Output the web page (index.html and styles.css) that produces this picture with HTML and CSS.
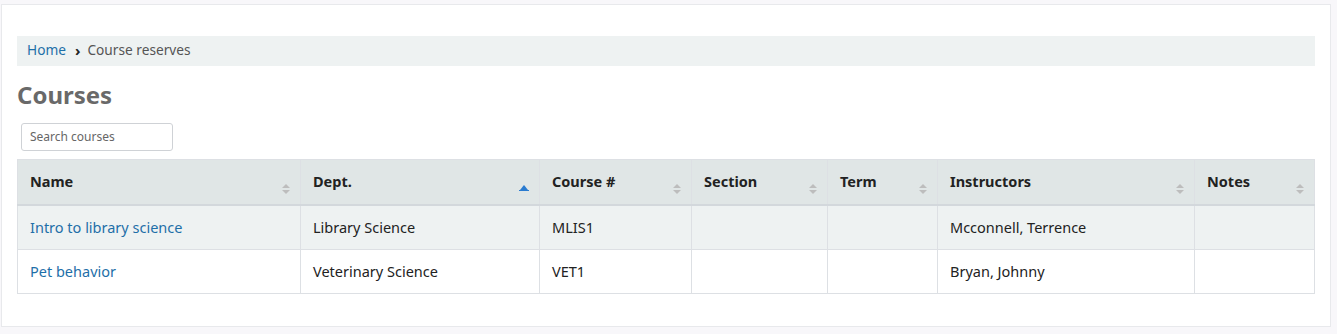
FILE: index.html
```html
<!DOCTYPE html>
<html lang="en">
<head>
    <meta charset="UTF-8">
    <meta name="viewport" content="width=device-width, initial-scale=1.0">
    <title>Course reserves</title>
    <link rel="stylesheet" href="styles.css">
</head>
<body>
    <main class="panel">
        <nav class="breadcrumb">
            <a href="#">Home</a>
            <span class="sep">&#8250;</span>
            <span class="current">Course reserves</span>
        </nav>

        <h1>Courses</h1>

        <div class="search">
            <input type="text" placeholder="Search courses">
        </div>

        <table class="courses">
            <colgroup>
                <col style="width:283px">
                <col style="width:239px">
                <col style="width:152px">
                <col style="width:136px">
                <col style="width:110px">
                <col style="width:257px">
                <col style="width:120px">
            </colgroup>
            <thead>
                <tr>
                    <th class="sortable">Name</th>
                    <th class="sorted-asc">Dept.</th>
                    <th class="sortable">Course #</th>
                    <th class="sortable">Section</th>
                    <th class="sortable">Term</th>
                    <th class="sortable">Instructors</th>
                    <th class="sortable">Notes</th>
                </tr>
            </thead>
            <tbody>
                <tr class="odd">
                    <td><a href="#">Intro to library science</a></td>
                    <td>Library Science</td>
                    <td>MLIS1</td>
                    <td></td>
                    <td></td>
                    <td>Mcconnell, Terrence</td>
                    <td></td>
                </tr>
                <tr>
                    <td><a href="#">Pet behavior</a></td>
                    <td>Veterinary Science</td>
                    <td>VET1</td>
                    <td></td>
                    <td></td>
                    <td>Bryan, Johnny</td>
                    <td></td>
                </tr>
            </tbody>
        </table>
    </main>
</body>
</html>
```

FILE: styles.css
```css
body { margin: 0; font-family: "Noto Sans", "Open Sans", sans-serif; font-size: 14px; color: #222; background-color: #f8f7fa; }
a { color: #1e6fa8; text-decoration: none; }

.panel { background: #fff; border: 1px solid #e8e9ec; margin: 4px 6px 0 1px; padding: 31px 15px 32px 15px; }

.breadcrumb { background: #eef2f2; height: 30px; box-sizing: border-box; padding: 0 0 3px 10px; display: flex; align-items: center; font-size: 13.7px; }
.breadcrumb .sep { font-weight: bold; color: #222; margin: 0 7px 0 9px; font-size: 15px; }
.breadcrumb .current { color: #555; }

h1 { font-size: 24px; font-weight: bold; color: #696969; margin: 14px 0 14px 0; line-height: 29px; }

.search { padding-left: 4px; margin-bottom: 8px; }
.search input { width: 152px; height: 28px; box-sizing: border-box; border: 1px solid #cfd2d6; border-radius: 3px; padding: 0 8px 1px; font-family: inherit; font-size: 12px; color: #333; }
.search input::placeholder { color: #666; }

.courses { width: 1297px; border-collapse: collapse; table-layout: fixed; font-size: 14.5px; }
.courses th, .courses td { border: 1px solid #dde0e4; padding: 11px 12px 13px; line-height: 20px; text-align: left; vertical-align: top; }
.courses th { background: #e0e6e6; font-weight: bold; border-bottom: 2px solid #d3d8dc; position: relative; }
.courses td { height: 20px; padding-bottom: 12px; }
.courses tr.odd td { background: #eef2f2; }

.sortable::after, .sorted-asc::after { content: ""; position: absolute; right: 10px; bottom: 10px; width: 8px; height: 10px; }
.sortable::after { background: url("data:image/svg+xml;utf8,<svg xmlns='http://www.w3.org/2000/svg' width='8' height='10' viewBox='0 0 8 10'><path d='M4 0L8 4H0Z M4 10L8 6H0Z' fill='%23bdbdbd'/></svg>") no-repeat; }
.sorted-asc::after { width: 10px; height: 6px; bottom: 13px; background: url("data:image/svg+xml;utf8,<svg xmlns='http://www.w3.org/2000/svg' width='10' height='6' viewBox='0 0 10 6'><path d='M5 0L9 5H1Z' fill='%232a7bd0'/><rect x='0' y='5' width='10' height='1' fill='%232a7bd0'/></svg>") no-repeat; }
```
